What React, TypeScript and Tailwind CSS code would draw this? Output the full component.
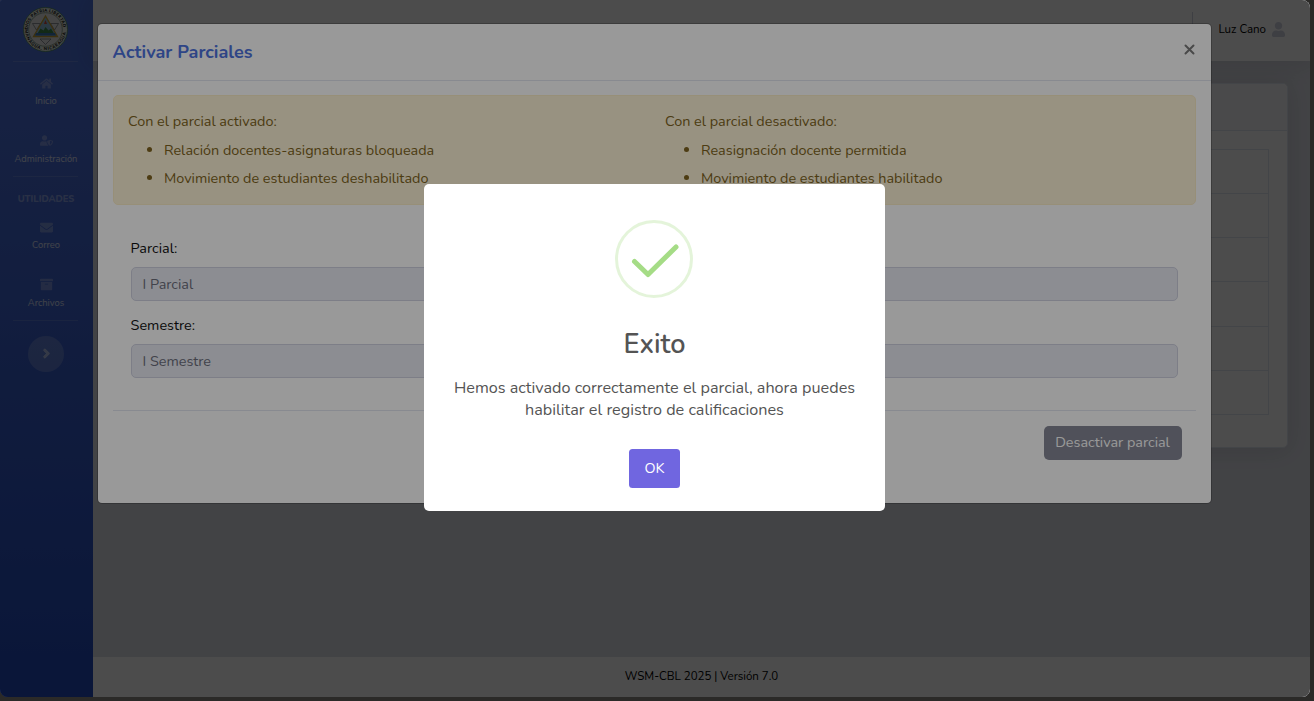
import React from "react";
import { FaHome, FaUserShield, FaEnvelope, FaArchive, FaAngleRight, FaUser } from "react-icons/fa";

function Seal() {
  return (
    <svg width="45" height="45" viewBox="0 0 45 45">
      <defs>
        <path id="ringTop" d="M4.800 22.500a17.700 17.700 0 0 1 35.400 0" />
        <path id="ringBottom" d="M1.900 22.500a20.600 20.600 0 0 0 41.200 0" />
      </defs>
      <circle cx="22.5" cy="22.5" r="22" fill="#e4eae2" stroke="#4f8a5c" strokeWidth="0.8" />
      <circle cx="22.5" cy="22.5" r="16.800" fill="#e6e9e6" stroke="#6f8474" strokeWidth="0.7" />
      <g fill="#10140f" fontSize="4.2" fontWeight="900" fontFamily="Lato, sans-serif">
        <text><textPath href="#ringTop" textLength="53">DIOS PATRIA LIBERTAD</textPath></text>
        <text><textPath href="#ringBottom" textLength="61">MANAGUA, NICARAGUA</textPath></text>
      </g>
      <path d="M9.500 16.500h8l-4 6.500zM27.500 16.500h8l-4 6.500zM17 32h11l-5.500 5.500z" fill="none" stroke="#7b7f86" strokeWidth="0.8" />
      <path d="M22.500 9L34.500 29.500H10.500z" fill="#8fc0dc" stroke="#c9a030" strokeWidth="1.3" />
      <path d="M14.500 26.500l3-5 3 2 2-3.500 3 3.500 2.500-2 3 5z" fill="#3f8a4d" />
      <path d="M13 26h19l1 2.500H12z" fill="#3a78b8" />
      <path d="M21 17l1.500-4 1.500 4z" fill="#d0463c" />
    </svg>
  );
}

function NavItem({ icon, label, labelClass = "-mt-[2px]" }: { icon: React.ReactNode; label: string; labelClass?: string }) {
  return (
    <div className="flex h-[57px] shrink-0 flex-col items-center pr-px pt-[9px]">
      <div className="flex h-[25px] items-center text-white/30">{icon}</div>
      <span className={`${labelClass} whitespace-nowrap text-[9.36px] leading-[14px] text-white/80`}>{label}</span>
    </div>
  );
}

const Divider = () => <div className="ml-[13px] h-px w-[65px] shrink-0 bg-white/15" />;

function Sidebar() {
  return (
    <aside className="flex w-[93px] shrink-0 flex-col bg-linear-to-b from-[#4e73df] from-10% to-[#224abe] to-100%">
      <div className="flex h-[61px] shrink-0 items-start justify-center pr-[2px] pt-[7px]"><Seal /></div>
      <Divider />
      <NavItem icon={<FaHome className="h-[13px] w-auto" />} label="Inicio" />
      <NavItem icon={<FaUserShield className="h-[13px] w-auto" />} label="Administración" labelClass="-mt-px" />
      <Divider />
      <div className="flex h-[29px] shrink-0 items-end justify-center pr-px">
        <span className="text-[9.36px] font-extrabold leading-[14px] text-white/40">UTILIDADES</span>
      </div>
      <NavItem icon={<FaEnvelope className="h-[13px] w-auto" />} label="Correo" />
      <NavItem icon={<FaArchive className="h-[13px] w-auto" />} label="Archivos" labelClass="-mt-px" />
      <Divider />
      <div className="ml-[28px] mt-[15px] flex size-9 items-center justify-center rounded-full bg-white/20 text-white/50">
        <FaAngleRight className="mb-[2px] ml-px h-[15px] w-auto" stroke="currentColor" strokeWidth="16" />
      </div>
    </aside>
  );
}

function Page() {
  return (
    <div className="flex h-full">
      <Sidebar />
      <div className="flex min-w-0 flex-1 flex-col bg-[#dfe1e9]">
        <header className="flex h-[61px] shrink-0 items-center justify-end bg-white pr-[25px] shadow-[0_2px_25px_rgba(58,59,69,0.15)]">
          <div className="mb-1 mr-[25px] h-[34px] w-px bg-[#d1d3e2]" />
          <span className="mb-[2px] text-[11.52px] text-black">Luz Cano</span>
          <FaUser className="mb-[3px] ml-[6px] h-[15px] w-[13px] text-[#d1d3e2]" />
        </header>
        <main className="flex-1 px-[22px] pt-[22px]">
          <section className="h-[365px] rounded-[5px] border border-[#e3e6f0] bg-white shadow-[0_2px_25px_rgba(58,59,69,0.15)]">
            <div className="h-[47px] rounded-t-[5px] border-b border-[#e3e6f0] bg-[#f8f9fc]" />
            <div className="mx-[18px] mt-[18px] border border-b-0 border-[#e3e6f0]">
              {[0, 1, 2, 3, 4, 5].map((row) => (
                <div key={row} className="h-[44.14px] border-b border-[#e3e6f0]" />
              ))}
            </div>
          </section>
        </main>
        <footer className="flex h-10 items-center justify-center bg-white text-[11.5px] text-black">
          <span>WSM-CBL 2025 | Versión 7.0</span>
        </footer>
      </div>
    </div>
  );
}

function Notes({ title, items }: { title: string; items: string[] }) {
  return (
    <div className="w-[537px] shrink-0">
      <p className="leading-[22px]">{title}</p>
      <ul className="mt-[7px] flex list-none flex-col gap-[6px]">
        {items.map((item) => (
          <li key={item} className="flex items-center leading-[22px]">
            <span className="mb-px ml-[19px] mr-[12px] size-[5px] rounded-full bg-[#806520]" />
            <span className="whitespace-nowrap">{item}</span>
          </li>
        ))}
      </ul>
    </div>
  );
}

function Field({ label, value }: { label: string; value: string }) {
  return (
    <div className="h-[77px]">
      <div className="-ml-[0.4px] h-[30px] leading-[22px] text-[#111]">{label}</div>
      <div className="flex h-[34px] items-center rounded-[5px] border border-[#d1d3e2] bg-[#eaecf4] px-[10.5px] pt-[2px] text-[#6e707e]">{value}</div>
    </div>
  );
}

function PartialsModal() {
  return (
    <div className="h-[481px] w-[1115px] rounded-[5px] border border-black/20 bg-white bg-clip-padding text-[14.4px]">
      <div className="flex h-[57px] items-center justify-between border-b border-[#e3e6f0] px-[15px]">
        <h5 className="-ml-[0.4px] text-[18px] font-bold text-[#4e73df]">Activar Parciales</h5>
        <svg className="mb-[5px] mr-px" width="11" height="11" viewBox="0 0 11 11" stroke="#7b7b7b" strokeWidth="2" strokeLinecap="round"><path d="M1.500 1.500l8 8M9.500 1.500l-8 8" /></svg>
      </div>
      <div className="px-[15px] pt-[14px]">
        <div className="flex h-[110px] rounded-[5px] border border-[#fceec9] bg-[#fdf3d8] px-[14px] pt-[14px] text-[#806520]">
          <Notes title="Con el parcial activado:" items={["Relación docentes-asignaturas bloqueada", "Movimiento de estudiantes deshabilitado"]} />
          <Notes title="Con el parcial desactivado:" items={["Reasignación docente permitida", "Movimiento de estudiantes habilitado"]} />
        </div>
        <div className="h-[205px] px-[18px] pt-[32px]">
          <Field label="Parcial:" value="I Parcial" />
          <Field label="Semestre:" value="I Semestre" />
        </div>
        <div className="flex justify-end border-t border-[#e3e6f0] pr-[14px] pt-[15px]">
          <button className="h-[34px] w-[138px] whitespace-nowrap rounded-[5px] bg-[#858796] pr-px text-white">Desactivar parcial</button>
        </div>
      </div>
    </div>
  );
}

function SuccessAlert() {
  return (
    <div className="flex h-[327px] w-[461px] flex-col items-center rounded-[5px] bg-white pt-9 text-[#545454]">
      <svg width="78" height="78" viewBox="0 0 78 78" fill="none" className="mr-px">
        <circle cx="39" cy="39" r="37.500" stroke="#a5dc86" strokeOpacity="0.3" strokeWidth="3" />
        <path d="M19.500 41.500L33 54.500L61 27" stroke="#a5dc86" strokeWidth="5" strokeLinecap="round" strokeLinejoin="round" />
      </svg>
      <h2 className="mt-[27px] text-[27px] font-semibold leading-[40px]">Exito</h2>
      <p className="mt-[12px] text-center text-[16.2px] leading-[22px]">
        <span className="whitespace-nowrap">Hemos activado correctamente el parcial, ahora puedes</span><br />
        <span className="whitespace-nowrap">habilitar el registro de calificaciones</span>
      </p>
      <button className="mt-[28px] h-[39px] w-[51px] rounded-[3.5px] bg-[#7066e0] text-[14.4px] text-white">OK</button>
    </div>
  );
}

export default function App() {
  return (
    <div className="h-[701px] w-[1314px] overflow-hidden bg-[#2b2a28] font-[Nunito,Lato,sans-serif]">
      <div className="relative isolate h-[697px] w-[1310px] overflow-hidden rounded-[8px] rounded-tl-[2px]">
        <Page />
        <div className="absolute inset-0 flex items-start justify-center bg-black/50 pr-px pt-[23px]">
          <PartialsModal />
        </div>
        <div className="absolute inset-0 flex items-center justify-center bg-black/40 pb-[2px] pr-px">
          <SuccessAlert />
        </div>
      </div>
    </div>
  );
}
